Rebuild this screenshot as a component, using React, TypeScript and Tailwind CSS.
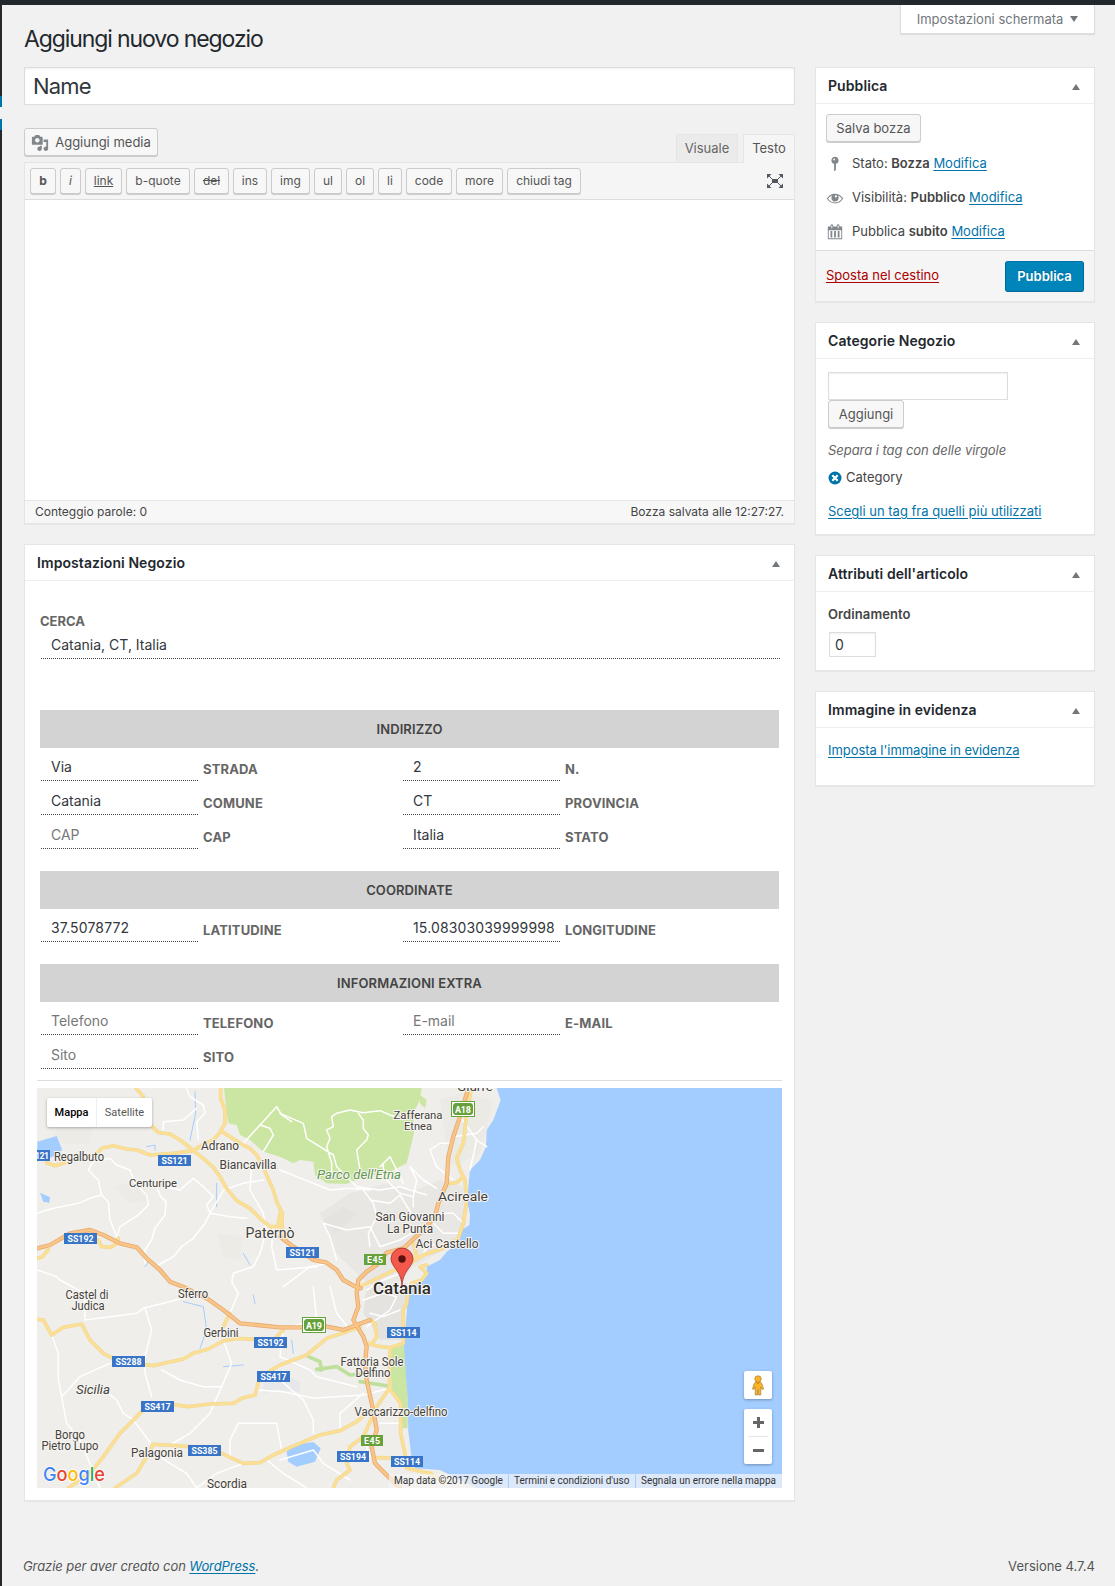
import React from "react";

const ICONS = {
  media:
    "M13 11V4c0-.55-.45-1-1-1h-1.67L9 1H5L3.67 3H2c-.55 0-1 .45-1 1v7c0 .55.45 1 1 1h10c.55 0 1-.45 1-1zM7 4.5c1.38 0 2.5 1.12 2.5 2.5S8.38 9.5 7 9.5 4.5 8.38 4.5 7 5.62 4.5 7 4.5zM14 6h5v10.5c0 1.38-1.12 2.5-2.5 2.5S14 17.88 14 16.5s1.12-2.5 2.5-2.5c.17 0 .34.02.5.05V9h-3V6zm-4 8.05V13h2v3.5c0 1.38-1.12 2.5-2.5 2.5S7 17.88 7 16.5 8.12 14 9.5 14c.17 0 .34.02.5.05z",
  calendar:
    "M15 4h3v14H2V4h3V3c0-.83.67-1.5 1.5-1.5S8 2.17 8 3v1h4V3c0-.83.67-1.5 1.5-1.5S15 2.17 15 3v1zM6 3v2.5c0 .28.22.5.5.5s.5-.22.5-.5V3c0-.28-.22-.5-.5-.5S6 2.72 6 3zm7 0v2.5c0 .28.22.5.5.5s.5-.22.5-.5V3c0-.28-.22-.5-.5-.5s-.5.22-.5.5zm4 14V8H3v9h14zM7 16V9H5v7h2zm4 0V9H9v7h2zm4 0V9h-2v7h2z",
  eye: "M18.3 9.5C15 4.9 8.5 3.8 3.9 7.2c-1.2.9-2.2 2.1-3 3.4.2.4.5.8.8 1.2 3.3 4.6 9.6 5.6 14.2 2.4.9-.7 1.7-1.4 2.4-2.4.3-.4.5-.8.8-1.2-.3-.4-.5-.8-.8-1.1zm-8.2-2.3c.5-.5 1.3-.5 1.8 0s.5 1.3 0 1.8-1.3.5-1.8 0-.5-1.3 0-1.8zm-.1 7.7c-3.1 0-6-1.6-7.7-4.2C3.5 9 5.1 7.8 7 7.2c-.7.8-1 1.7-1 2.7 0 2.2 1.7 4.1 4 4.1 2.2 0 4.1-1.7 4.1-4v-.1c0-1-.4-2-1.1-2.7 1.9.6 3.5 1.8 4.7 3.5-1.7 2.6-4.6 4.2-7.7 4.2z",
  pin: "M14 6c0 1.86-1.28 3.41-3 3.86V16c0 1-2 2-2 2V9.86C7.28 9.41 6 7.86 6 6c0-2.21 1.79-4 4-4s4 1.79 4 4zM8 5c0 .55.45 1 1 1s1-.45 1-1-.45-1-1-1-1 .45-1 1z",
};

function Icon({ d, className }: { d: string; className?: string }) {
  return (
    <svg viewBox="0 0 20 20" fill="#82878c" className={className}>
      <path d={d} />
    </svg>
  );
}

function Triangle({ down }: { down?: boolean }) {
  return (
    <svg width="8" height="6" viewBox="0 0 8 6" fill="#72777c" className="shrink-0">
      <path d={down ? "M0 0H8L4 6Z" : "M0 6H8L4 0Z"} />
    </svg>
  );
}

function Box({
  title,
  className,
  children,
}: {
  title: string;
  className: string;
  children: React.ReactNode;
}) {
  return (
    <section className={"flex flex-col border border-[#e5e5e5] bg-white shadow-[0_1px_1px_rgba(0,0,0,0.04)] " + className}>
      <header className="flex h-9 shrink-0 items-center justify-between border-b border-[#eee] pl-3 pr-[14px]">
        <h2 className="text-[14px] font-semibold leading-9 tracking-[0.08px] text-[#23282d]">{title}</h2>
        <div className="pt-[2px]">
          <Triangle />
        </div>
      </header>
      {children}
    </section>
  );
}

const btn =
  "flex items-center justify-center whitespace-nowrap rounded-[3px] border border-[#ccc] bg-[#f7f7f7] pt-[2px] text-[13px] text-[#555] shadow-[0_1px_0_#ccc]";

const quickTags: [string, string][] = [
  ["b", "w-[26px] font-bold"],
  ["i", "w-[21px] italic"],
  ["link", "w-[37px] underline"],
  ["b-quote", "w-[64px]"],
  ["del", "w-[35px] line-through"],
  ["ins", "w-[34px]"],
  ["img", "w-[39px]"],
  ["ul", "w-[28px]"],
  ["ol", "w-[28px]"],
  ["li", "w-[24px]"],
  ["code", "w-[46px]"],
  ["more", "w-[47px]"],
  ["chiudi tag", "w-[74px]"],
];

function Field({ value, label, placeholder }: { value: string; label: string; placeholder?: boolean }) {
  return (
    <div className="flex w-[362px] items-start">
      <div
        className={
          "h-[29px] w-[157px] whitespace-nowrap border-b border-dotted border-[#444] pl-[10px] pt-[3px] text-[14px] leading-[24px] " +
          (/^\d/.test(value) ? "tracking-[0.15px] " : "") +
          (placeholder ? "text-[#777]" : "text-[#32373c]")
        }
      >
        {value}
      </div>
      <div className="pl-[5px] pt-[7px] text-[13px] font-bold leading-[20px] tracking-[0.15px] text-[#666]">{label}</div>
    </div>
  );
}

function Band({ children, className }: { children: string; className?: string }) {
  return (
    <div className={"ml-[-1px] flex h-[38px] w-[739px] items-center justify-center bg-[#d3d3d3] pt-[2px] text-[13px] font-semibold tracking-[0.1px] text-[#444] " + (className || "")}>
      {children}
    </div>
  );
}

const yellowRoads = [
  "M318 24L340 50 335 75M365 138L385 158 420 162 450 180 470 195 490 212 525 190 550 180 568 160 585 130 585 90 572 55 572 24",
  "M50 248L75 257 100 250 130 235 200 222 215 205 250 197 290 207 320 210 360 225 400 222 430 220 490 212 520 235 550 262 570 290 590 325 620 362 660 385 690 415 720 440 755 440 757 400 740 365 730 330 712 290 695 250 680 225 660 205 630 190 600 170 575 155",
  "M22 535L38 530 55 508M205 480L215 500 240 502 262 490 265 475",
  "M22 718L40 720 65 765 100 742 155 732 180 780 220 820 245 833 330 852 370 857 460 837 490 820 535 807 580 783 620 775 680 778 730 780",
  "M115 1224L180 1180 220 1130 270 1060 310 1020 345 985 400 970 475 980 540 972 610 970 635 955 675 945 690 890 750 855 830 825 890 775 930 762 990 740",
  "M255 1224L320 1180 360 1115 368 1093 410 1095 480 1100 560 1112 600 1132 640 1150 690 1148 730 1125 790 1098 870 1065 930 1052 980 1025 1020 990",
  "M745 435L750 400 760 460 770 485",
  "M1325 24L1310 100 1300 190 1280 235 1290 270 1305 300 1310 365 1300 430 1285 475 1240 505 1180 525 1140 550 1090 572 990 620",
  "M1190 555L1170 560 1190 580 1175 600 1145 610 1135 630 1130 670 1120 690 1120 790 1080 803 1040 798 1015 790",
  "M1080 803L1078 925 1040 980 1000 1070 960 1100 950 1150 960 1170 920 1200 910 1224",
  "M1078 925L1112 970 1112 1060 1125 1120 1130 1165 1200 1180 1240 1210M1040 1133L1130 1135",
  "M1020 720L1035 730 1040 770 1025 792M580 740L600 700M730 780L760 750",
  "M1250 312L1280 308 1300 290M1150 490L1160 530 1130 560",
];

const orangeRoads = [
  "M22 505L60 495 120 460 180 450 220 465 270 490 320 502 350 535 390 570 420 605 470 625 530 655 580 690 630 730 680 735 750 742 830 742 880 738 940 750 1020 720",
  "M750 470L790 500 850 540 890 548 920 570 940 600 980 622 992 625",
  "M1315 24L1290 110 1270 170 1255 230 1250 310 1225 370 1215 410 1180 450 1120 505 1070 518 1040 555 1010 575 985 600 980 640 985 680 970 720 1000 770 1010 800 1005 850 1010 900 1025 970 1035 1020 1040 1050 1025 1100 1035 1150 1060 1175 1110 1224",
];

const whiteRoads = [
  "M22 400L70 385 145 370 180 355 215 345 235 365 240 420 260 470M215 345L205 300 175 270 190 245 240 235 260 255 300 270 315 310 350 345 355 375 325 405 270 440 260 475",
  "M380 320L392 350 408 365 405 405 375 445 365 480 345 510 345 550M385 555L430 530 455 500 490 475 525 430 540 400 600 410 650 415M540 400L530 375 550 350 520 320 490 295 450 330 400 320M540 400L580 330 640 310 700 300",
  "M470 24L480 50 520 75 525 100 500 125 505 180M400 150L400 125 460 120 500 85M640 190L690 135 740 80 755 105 785 125M690 135L720 145 730 165 700 215",
  "M665 250L660 330 700 400 710 450 690 520 670 560 610 580 605 605 625 640 600 700M730 440L725 500 740 570 860 560",
  "M22 570L80 590 90 600 165 640 165 720 320 700 340 685 460 655 530 635M345 685L365 750 345 830 345 880 365 950",
  "M65 765L85 820 85 900 95 950 110 1030 150 1080 175 1140 210 1224M95 950L150 890 240 850M235 940L260 960 280 1000 310 1020 365 1093",
  "M420 1095L480 1060 540 1000 575 920 605 850 580 780M395 870L450 900 520 920 570 920M600 1130L600 1080 625 1030 740 1030 755 1110M680 930L760 935 850 955 1000 945 1080 925",
  "M360 1110L420 1150 470 1180 500 1224M500 1224L560 1180 640 1150M710 1140L760 1180 830 1224",
  "M750 100L820 130 830 175 910 225 920 260 980 320 1050 330 1110 320 1190 345M905 285L905 250 890 200 900 175 890 150 910 140 905 110 920 100 960 90 1000 98 1050 92 1080 105 1110 115M985 100L1000 120 1000 145 1015 165 1010 180 980 210 990 270M750 270L800 290 900 330 960 325 1020 330",
  "M1000 330L1030 370 1040 410 1015 460 1020 500M1060 250L1060 290 1110 340 1150 350 1150 380M1050 260L1080 230 1100 270 1120 310M1020 360L1080 370 1110 345 1150 410 1220 400M1150 350L1160 300 1140 260 1180 300 1220 325",
  "M880 430L950 450 1020 440 1050 500 1110 480 1170 445M880 430L900 470 920 540M1200 210L1230 190 1260 190M1200 210L1220 260 1270 300M1290 110L1340 180 1370 200M1270 170L1340 160 1360 140M1340 180L1320 270",
  "M1230 400L1270 400 1300 430M1210 430L1240 460 1290 460M1180 520L1200 490 1240 505M1150 540L1110 580 1060 600 1010 630M1000 660L1060 640 1100 650 1080 690 1010 740M1020 700L1060 710 1110 690M900 620L920 700 960 750M760 620L840 560 900 550",
  "M850 620L860 720 780 740M760 740L750 830 840 870 860 890 980 920M1000 1070L1020 1130M1050 1030L1110 1030M930 1050L930 1000 1000 940M750 900L820 960 850 1020 850 1060M750 1140L850 1110 880 1150 960 1200",
];

const placeLabels: [string, number, number, number, number?][] = [
  ["Giurre", 475, 1091, 13, 36],
  ["Zafferana", 418, 1119, 11.5, 49],
  ["Etnea", 418, 1130, 11.5, 28],
  ["Adrano", 220, 1150, 12, 38],
  ["Regalbuto", 79, 1161, 12, 50],
  ["Biancavilla", 248, 1169, 12, 57],
  ["Centuripe", 153, 1187, 11.5, 48],
  ["Acireale", 463, 1201, 13.5, 50],
  ["San Giovanni", 410, 1221, 12, 69],
  ["La Punta", 410, 1233, 12, 46],
  ["Paternò", 270, 1238, 14, 49],
  ["Aci Castello", 447, 1248, 12, 63],
  ["Castel di", 87, 1299, 12, 43],
  ["Judica", 88, 1310, 12, 33],
  ["Sferro", 193, 1298, 12, 30],
  ["Gerbini", 221, 1337, 12, 35],
  ["Fattoria Sole", 372, 1366, 12, 63],
  ["Delfino", 373, 1377, 12, 35],
  ["Vaccarizzo-delfino", 401, 1416, 12, 93],
  ["Borgo", 70, 1439, 12, 30],
  ["Pietro Lupo", 70, 1450, 12, 57],
  ["Palagonia", 157, 1457, 12.5, 52],
  ["Scordia", 227, 1488, 12.5, 40],
];

const roadShields: [string, number, number, number][] = [
  ["121", 34, 1150, 16],
  ["SS121", 158, 1155, 33],
  ["SS192", 64, 1233, 33],
  ["SS121", 286, 1247, 33],
  ["SS192", 254, 1337, 33],
  ["SS288", 112, 1356, 33],
  ["SS417", 257, 1371, 33],
  ["SS417", 141, 1401, 33],
  ["SS114", 387, 1327, 33],
  ["SS385", 188, 1445, 33],
  ["SS194", 337, 1451, 32],
  ["SS114", 391, 1456, 32],
];

const motorways: [string, number, number][] = [
  ["E45", 364, 1254],
  ["E45", 361, 1435],
];

function MapView() {
  return (
    <div className="relative h-[400px] w-[745px] overflow-hidden bg-[#f0eeea] font-['Roboto',sans-serif]">
      <svg width="745" height="400" viewBox="37 1088 745 400" className="block">
        <g transform="translate(30 1080) scale(.33333)" fill="none" strokeLinejoin="round" strokeLinecap="round">
          <g fill="#e5e3df" stroke="none">
            <path d="M1070 310L1160 330 1230 300 1300 320 1310 430 1260 500 1150 560 1080 640 1000 600 920 520 870 400 960 340Z" opacity=".65" />
            <path d="M1010 620L1130 610 1120 780 1050 780 1000 700ZM940 380L980 400 920 460 880 420Z" />
            <path d="M750 880L810 905 810 935 750 930 700 940 700 890Z" fill="#e6e7ea" />
            <path d="M1230 60L1290 40 1390 60 1350 220 1260 260Z" opacity=".4" />
            <path d="M250 320L330 300 360 360 300 370ZM60 190L120 60 200 80 180 190ZM560 460L640 470 630 540 580 530Z" opacity=".3" />
          </g>
          <path
            fill="#cbe6a3"
            d="M582 24L1175 24 1170 60 1150 100 1152 160 1130 250 1080 275 1000 290 950 312 890 310 855 285 850 245 810 240 790 250 750 230 700 215 660 180 630 165 620 135 595 130 588 80Z"
          />
          <path fill="#cbe6a3" d="M1170 45L1190 60 1185 85 1170 70ZM1080 805L1125 795 1133 950 1133 1045 1118 1045 1110 965 1085 930Z" />
          <path stroke="#bfe09c" strokeWidth="11" d="M835 830L870 845 875 870 860 868 920 860 960 885 1020 880M990 905L1075 918" />
          <path
            fill="#a3ccff"
            d="M1400 24L1412 60 1390 120 1370 150 1368 200 1350 240 1320 270 1315 320 1313 370 1320 405 1318 435 1295 450 1285 490 1250 515 1230 540 1190 560 1192 585 1160 610 1138 630 1132 675 1122 795 1127 875 1133 955 1135 1055 1145 1135 1155 1165 1230 1170 1290 1200 1340 1224 2270 1224 2270 20Z"
          />
          <g fill="#a3ccff">
            <path d="M22 185L80 168 97 210 65 232 22 230ZM30 338L60 352 58 368 40 365ZM770 1115L795 1095 850 1086 872 1105 855 1145 800 1160 775 1145Z" />
          </g>
          <g stroke="#a3ccff" strokeWidth="3">
            <path d="M495 35L497 100 480 180M560 310L560 380M460 665L520 680 530 750 510 805M640 520L660 555M350 200L375 195 375 210M345 560L360 540M670 645L675 670M785 780L790 820M580 860L640 855" />
          </g>
          <g stroke="#fff" strokeWidth="4.500">
            {whiteRoads.map((d) => (
              <path key={d} d={d} />
            ))}
          </g>
          <g stroke="#efd694" strokeWidth="11">
            {yellowRoads.map((d) => (
              <path key={d} d={d} />
            ))}
          </g>
          <g stroke="#fbdf94" strokeWidth="8">
            {yellowRoads.map((d) => (
              <path key={d} d={d} />
            ))}
          </g>
          <g stroke="#e5ac70" strokeWidth="13">
            {orangeRoads.map((d) => (
              <path key={d} d={d} />
            ))}
          </g>
          <g stroke="#fac488" strokeWidth="8">
            {orangeRoads.map((d) => (
              <path key={d} d={d} />
            ))}
          </g>
        </g>

        <g textAnchor="middle" fill="#44423c" stroke="#f7f5f2" strokeWidth="2" strokeLinejoin="round" paintOrder="stroke">
          {placeLabels.map(([t, x, y, s, w]) => (
            <text key={t} x={x} y={y} fontSize={s} textLength={w} lengthAdjust="spacingAndGlyphs">
              {t}
            </text>
          ))}
          <text x="359" y="1179" fontSize="12.500" fontStyle="italic" fill="#62984d" textLength="84" lengthAdjust="spacingAndGlyphs">
            Parco dell'Etna
          </text>
          <text x="93" y="1394" fontSize="13" fontStyle="italic" textLength="34" lengthAdjust="spacingAndGlyphs">
            Sicilia
          </text>
          <text x="402" y="1294" fontSize="16.500" fontWeight="500" fill="#2f2d28" textLength="58" lengthAdjust="spacingAndGlyphs">
            Catania
          </text>
        </g>

        <g fontSize="8.800" fontWeight="700" textAnchor="middle" fill="#fff">
          {roadShields.map(([t, x, y, w]) => (
            <g key={t + x + y}>
              <rect x={x} y={y} width={w} height="11" fill="#3874c8" />
              <text x={x + w / 2} y={y + 8.7} textLength={t === "121" ? 14 : 26}>
                {t}
              </text>
            </g>
          ))}
          {motorways.map(([t, x, y]) => (
            <g key={y}>
              <rect x={x} y={y} width="22" height="11" fill="#66a13c" />
              <text x={x + 11} y={y + 8.7} textLength="16">
                {t}
              </text>
            </g>
          ))}
          {(
            [
              ["A18", 451, 1101],
              ["A19", 302, 1317],
            ] as [string, number, number][]
          ).map(([t, x, y]) => (
            <g key={t}>
              <rect x={x + 0.5} y={y + 0.5} width="23" height="15" fill="#fff" stroke="#66a13c" />
              <path d={`M${x + 2} ${y + 4}l2-2h16l2 2v8l-2 2h-16l-2-2Z`} fill="#66a13c" />
              <text x={x + 12} y={y + 11.5} textLength="16" fontSize="9">
                {t}
              </text>
            </g>
          ))}
        </g>

        <path
          d="M402 1286C401.5 1276 397.500 1271.500 394 1266.500C392 1263.500 391 1261 391 1259A11 11 0 0 1 413 1259C413 1261 412 1263.500 410 1266.500C406.500 1271.500 402.500 1276 402 1286Z"
          fill="#f4584d"
          stroke="#a4312a"
          strokeWidth=".8"
        />
        <circle cx="402" cy="1259" r="3.700" fill="#59110f" />

        <text x="43" y="1481" fontSize="19" fontFamily="Inter" textLength="62" lengthAdjust="spacingAndGlyphs" stroke="#fff" strokeWidth="1.500" paintOrder="stroke" fontWeight="500">
          <tspan fill="#4285f4">G</tspan>
          <tspan fill="#ea4335">o</tspan>
          <tspan fill="#fbbc05">o</tspan>
          <tspan fill="#4285f4">g</tspan>
          <tspan fill="#34a853">l</tspan>
          <tspan fill="#ea4335">e</tspan>
        </text>
      </svg>

      <div className="absolute left-[10px] top-[10px] flex h-[29px] w-[105px] rounded-[2px] bg-white text-[11px] leading-[29px] shadow-[0_1px_3px_rgba(0,0,0,0.3)]">
        <span className="w-[50px] border-r border-[#eee] text-center font-medium text-black">Mappa</span>
        <span className="flex-1 text-center text-[#565656]">Satellite</span>
      </div>

      <div className="absolute right-[10px] top-[283px] flex h-7 w-7 items-center justify-center rounded-[2px] bg-white shadow-[0_1px_3px_rgba(0,0,0,0.3)]">
        <svg width="12" height="21" viewBox="0 0 12 21" fill="#fbb424" stroke="#a98240" strokeWidth=".7">
          <path d="M3.500 7H8.500L10 9 11.500 14 10.300 14.600 8.800 12V20H6.500V15H5.500V20H3.200V12L1.700 14.600.5 14 2 9Z" />
          <circle cx="6" cy="4" r="3.200" />
          <path d="M4.200 7.500H7.800L6 9.500Z" fill="#e67a1e" stroke="none" />
        </svg>
      </div>

      <div className="absolute right-[10px] top-[321px] flex h-[55px] w-7 flex-col items-center rounded-[2px] bg-white shadow-[0_1px_3px_rgba(0,0,0,0.3)]">
        <div className="flex h-[27px] items-center">
          <svg width="11" height="11" viewBox="0 0 11 11" fill="#666">
            <path d="M4 0H7V4H11V7H7V11H4V7H0V4H4Z" />
          </svg>
        </div>
        <div className="h-px w-5 bg-[#e6e6e6]" />
        <div className="flex h-[27px] items-center">
          <div className="h-[3px] w-[11px] bg-[#666]" />
        </div>
      </div>

      <div className="absolute bottom-0 right-0 flex h-[14px] whitespace-nowrap bg-[#f5f5f5]/70 text-[10px] leading-[14px] text-[#333]">
        <span className="w-[119px] pl-[5px]">Map data ©2017 Google</span>
        <span className="w-[127px] border-l border-[#a3ccff] pl-[5px]">Termini e condizioni d'uso</span>
        <span className="w-[147px] border-l border-[#a3ccff] pl-[5px]">Segnala un errore nella mappa</span>
      </div>
    </div>
  );
}

const link = "text-[#0073aa] underline underline-offset-2";

export default function App() {
  return (
    <div className="flex h-[1586px] w-[1115px] flex-col overflow-hidden bg-[#f1f1f1] font-['Inter',sans-serif] text-[13px] text-[#444]">
      <div className="h-[5px] shrink-0 bg-[#23282d]" />
      <div className="flex flex-1">
        <aside className="flex w-[2px] shrink-0 flex-col bg-[#23282d]">
          <div className="h-[91px]" />
          <div className="h-[11px] bg-[#0073aa]" />
          <div className="h-3 bg-[#f1f1f1]" />
          <div className="h-[11px] bg-[#0073aa]" />
        </aside>

        <div className="flex flex-1 flex-col pl-[22px] pr-5">
          <div className="flex h-[62px] justify-between">
            <h1 className="pt-[18px] text-[23px] leading-[32px] tracking-[-1.1px] text-[#23282d]">Aggiungi nuovo negozio</h1>
            <div className="flex h-[29px] w-[195px] items-center justify-center gap-[7px] border border-t-0 border-[#ddd] bg-white text-[13px] text-[#72777c] shadow-[0_1px_1px_rgba(0,0,0,0.08)]">
              <span className="pt-[2px]">Impostazioni schermata</span>
              <Triangle down />
            </div>
          </div>

          <div className="flex gap-5">
            <main className="w-[771px] shrink-0">
              <div className="flex h-[38px] items-center border border-[#ddd] bg-white pl-2 text-[22px] tracking-[-0.8px] text-[#32373c] shadow-[inset_0_1px_2px_rgba(0,0,0,0.07)]">
                Name
              </div>

              <div className="mt-[23px] flex h-[34px] justify-between">
                <div className={btn + " h-7 w-[134px] gap-[6px]"}>
                  <Icon d={ICONS.media} className="h-[18px] w-[18px]" />
                  Aggiungi media
                </div>
                <div className="flex items-start gap-[5px] pt-[6px] text-[13px] leading-[27px]">
                  <div className="h-[28px] w-[62px] border border-b-0 border-[#e5e5e5] bg-[#ebebeb] text-center text-[#666]">Visuale</div>
                  <div className="relative z-10 h-[29px] w-[52px] border border-b-0 border-[#e5e5e5] bg-[#f5f5f5] text-center text-[#555]">Testo</div>
                </div>
              </div>

              <div className="border border-[#e5e5e5] bg-white shadow-[0_1px_1px_rgba(0,0,0,0.04)]">
                <div className="flex h-[37px] items-center justify-between border-b border-[#ddd] bg-[#f5f5f5] pl-[5px] pr-[11px]">
                  <div className="flex gap-1">
                    {quickTags.map(([t, c]) => (
                      <div key={t} className={"flex h-[26px] items-center justify-center whitespace-nowrap rounded-[3px] border border-[#ccc] bg-[#f7f7f7] text-[12px] text-[#555] shadow-[0_1px_0_#ccc] " + c}>
                        {t}
                      </div>
                    ))}
                  </div>
                  <svg width="16" height="14" viewBox="0 0 16 14" fill="#50575e" stroke="#50575e">
                    <path d="M5 5H11V9H5Z" stroke="none" />
                    <path d="M2 2L6 6M14 2L10 6M2 12L6 8M14 12L10 8" strokeWidth="1" />
                    <path d="M0 0H4.500L0 4.500ZM16 0H11.500L16 4.500ZM0 14H4.500L0 9.500ZM16 14H11.500L16 9.500Z" stroke="none" />
                  </svg>
                </div>
                <div className="h-[300px]" />
                <div className="flex h-[23px] items-center justify-between border-t border-[#e5e5e5] bg-[#f7f7f7] px-[10px] text-[12px]">
                  <span>Conteggio parole: 0</span>
                  <span>Bozza salvata alle 12:27:27.</span>
                </div>
              </div>

              <Box title="Impostazioni Negozio" className="mt-5 h-[957px]">
                <div className="pl-4">
                  <div className="ml-[-1px] mt-[30px] h-5 text-[13px] font-bold leading-5 text-[#666]">CERCA</div>
                  <div className="mt-[2px] h-[26px] w-[739px] border-b border-dotted border-[#444] pl-[10px] text-[14px] leading-[24px] text-[#32373c]">
                    Catania, CT, Italia
                  </div>
                  <Band className="mt-[51px]">INDIRIZZO</Band>
                  <div className="mt-1 flex flex-wrap gap-y-[5px]">
                    <Field value="Via" label="STRADA" />
                    <Field value="2" label="N." />
                    <Field value="Catania" label="COMUNE" />
                    <Field value="CT" label="PROVINCIA" />
                    <Field value="CAP" label="CAP" placeholder />
                    <Field value="Italia" label="STATO" />
                  </div>
                  <Band className="mt-[22px]">COORDINATE</Band>
                  <div className="mt-1 flex flex-wrap">
                    <Field value="37.5078772" label="LATITUDINE" />
                    <Field value="15.08303039999998" label="LONGITUDINE" />
                  </div>
                  <Band className="mt-[22px]">INFORMAZIONI EXTRA</Band>
                  <div className="mt-1 flex flex-wrap gap-y-[5px]">
                    <Field value="Telefono" label="TELEFONO" placeholder />
                    <Field value="E-mail" label="E-MAIL" placeholder />
                    <Field value="Sito" label="SITO" placeholder />
                  </div>
                </div>
                <div className="ml-3 mt-[11px] h-px w-[745px] bg-[#ddd]" />
                <div className="ml-3 mt-[7px]">
                  <MapView />
                </div>
              </Box>
            </main>

            <div className="flex w-[280px] flex-col gap-5">
              <Box title="Pubblica" className="h-[235px]">
                <div className="flex-1 pl-[10px] pt-[10px]">
                  <div className={btn + " h-7 w-[95px]"}>Salva bozza</div>
                  <div className="mt-[5px] flex flex-col">
                    <div className="flex h-[34px] items-center gap-2">
                      <Icon d={ICONS.pin} className="h-[18px] w-[18px]" />
                      <span>
                        Stato: <b className="font-semibold">Bozza</b> <a className={link}>Modifica</a>
                      </span>
                    </div>
                    <div className="flex h-[34px] items-center gap-2">
                      <Icon d={ICONS.eye} className="h-[18px] w-[18px]" />
                      <span>
                        Visibilità: <b className="font-semibold">Pubblico</b> <a className={link}>Modifica</a>
                      </span>
                    </div>
                    <div className="flex h-[34px] items-center gap-2">
                      <Icon d={ICONS.calendar} className="h-[18px] w-[18px]" />
                      <span>
                        Pubblica <b className="font-semibold">subito</b> <a className={link}>Modifica</a>
                      </span>
                    </div>
                  </div>
                </div>
                <div className="flex h-[51px] items-center justify-between border-t border-[#ddd] bg-[#f5f5f5] px-[10px]">
                  <a className="text-[#a00] underline underline-offset-2">Sposta nel cestino</a>
                  <div className="mt-px flex h-[31px] w-[79px] items-center justify-center rounded-[3px] border border-[#006799] border-t-[#0073aa] bg-[#0085ba] font-semibold text-white [text-shadow:0_-1px_1px_#006799]">
                    Pubblica
                  </div>
                </div>
              </Box>

              <Box title="Categorie Negozio" className="h-[213px]">
                <div className="pl-3 pt-[13px]">
                  <div className="h-7 w-[180px] border border-[#ddd] bg-white shadow-[inset_0_1px_2px_rgba(0,0,0,0.07)]" />
                  <div className={btn + " h-7 w-[76px]"}>Aggiungi</div>
                  <p className="mt-3 leading-5 tracking-[-0.05px] italic text-[#666]">Separa i tag con delle virgole</p>
                  <div className="mt-2 flex h-5 items-center gap-1">
                    <svg width="14" height="14" viewBox="0 0 14 14">
                      <circle cx="7" cy="7" r="6.500" fill="#0073aa" />
                      <path d="M4.300 4.300L9.700 9.700M9.700 4.300L4.300 9.700" stroke="#fff" strokeWidth="2.200" />
                    </svg>
                    <span>Category</span>
                  </div>
                  <p className="mt-[13px] leading-5">
                    <a className={link}>Scegli un tag fra quelli più utilizzati</a>
                  </p>
                </div>
              </Box>

              <Box title="Attributi dell'articolo" className="h-[116px]">
                <div className="pl-3 pt-3">
                  <p className="font-semibold leading-5 tracking-[0.1px]">Ordinamento</p>
                  <div className="ml-px mt-2 flex h-[25px] w-[47px] items-center border border-[#ddd] bg-white pl-[5px] text-[14px] text-[#32373c] shadow-[inset_0_1px_2px_rgba(0,0,0,0.07)]">
                    0
                  </div>
                </div>
              </Box>

              <Box title="Immagine in evidenza" className="h-[95px]">
                <p className="pl-3 pt-3 leading-5 tracking-[-0.05px]">
                  <a className={link}>Imposta l'immagine in evidenza</a>
                </p>
              </Box>
            </div>
          </div>

          <footer className="mt-[56px] flex h-5 items-center justify-between text-[#555]">
            <p className="ml-[-1px] tracking-[-0.08px] italic">
              Grazie per aver creato con <a className={link}>WordPress</a>.
            </p>
            <p>Versione 4.7.4</p>
          </footer>
        </div>
      </div>
    </div>
  );
}
